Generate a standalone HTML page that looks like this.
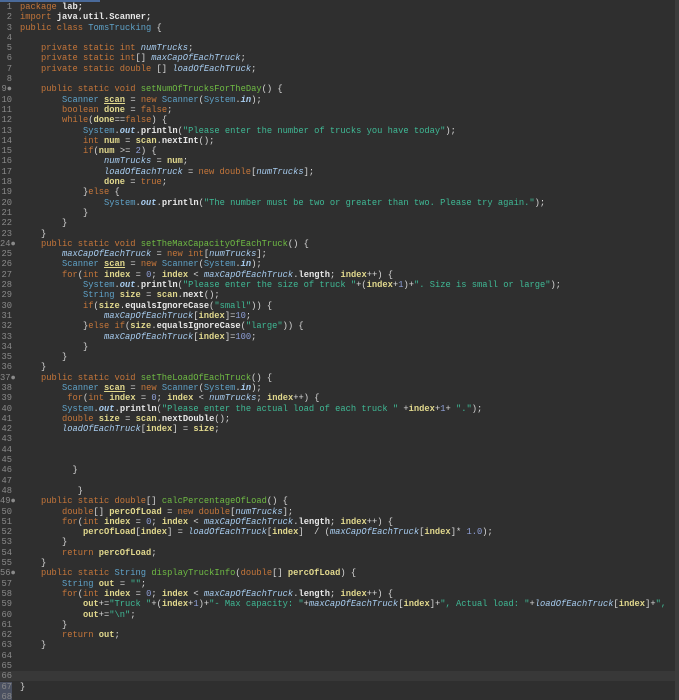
<!DOCTYPE html>
<html><head><meta charset="utf-8"><style>
html,body{margin:0;padding:0;background:#2f2f2f;width:679px;height:700px;overflow:hidden}
.wrap{position:relative;width:679px;height:700px;background:#2f2f2f}
.top{position:absolute;left:0;top:0;width:100px;height:2px;background:#4a6a9a}
.rb{position:absolute;right:0;top:0;width:4px;height:700px;background:#3c3c3c}
.cur{position:absolute;left:0;top:671px;width:675px;height:10px;background:#383838}
pre{margin:0;position:absolute;top:2px;left:0;font-family:"Liberation Mono",monospace;font-size:8.75px;line-height:10.29px;color:#d8d8d8}
.g{display:inline-block;width:12px;text-align:right;color:#8a8a8a;margin-right:8px}
.k{color:#c5763a}.s{color:#3fb995}.v{color:#e2d98e;font-weight:bold}.f{color:#a8cdf0;font-style:italic}
.m{color:#6fbb44}.t{color:#5fa2c8}.n{color:#8fa0d8}.o{color:#a8cdf0;font-style:italic;font-weight:bold}.p{color:#e8e8e8;font-weight:bold}
</style></head><body><div class="wrap"><div class="top"></div><div class="rb"></div><div class="cur"></div>
<pre><span class="g">1</span><span class="k">package</span> <span class="p">lab;</span>
<span class="g">2</span><span class="k">import</span> <span class="p">java.util.Scanner;</span>
<span class="g">3</span><span class="k">public class</span> <span class="t">TomsTrucking</span> {
<span class="g">4</span>
<span class="g">5</span>    <span class="k">private static int</span> <span class="f">numTrucks</span>;
<span class="g">6</span>    <span class="k">private static int</span>[] <span class="f">maxCapOfEachTruck</span>;
<span class="g">7</span>    <span class="k">private static double</span> [] <span class="f">loadOfEachTruck</span>;
<span class="g">8</span>
<span class="g">9●</span>    <span class="k">public static void</span> <span class="m">setNumOfTrucksForTheDay</span>() {
<span class="g">10</span>        <span class="t">Scanner</span> <span class="v"><u>scan</u></span> = <span class="k">new</span> <span class="t">Scanner</span>(<span class="t">System</span>.<span class="o">in</span>);
<span class="g">11</span>        <span class="k">boolean</span> <span class="v">done</span> = <span class="k">false</span>;
<span class="g">12</span>        <span class="k">while</span>(<span class="v">done</span>==<span class="k">false</span>) {
<span class="g">13</span>            <span class="t">System</span>.<span class="o">out</span>.<span class="p">println</span>(<span class="s">"Please enter the number of trucks you have today"</span>);
<span class="g">14</span>            <span class="k">int</span> <span class="v">num</span> = <span class="v">scan</span>.<span class="p">nextInt</span>();
<span class="g">15</span>            <span class="k">if</span>(<span class="v">num</span> &gt;= <span class="n">2</span>) {
<span class="g">16</span>                <span class="f">numTrucks</span> = <span class="v">num</span>;
<span class="g">17</span>                <span class="f">loadOfEachTruck</span> = <span class="k">new double</span>[<span class="f">numTrucks</span>];
<span class="g">18</span>                <span class="v">done</span> = <span class="k">true</span>;
<span class="g">19</span>            }<span class="k">else</span> {
<span class="g">20</span>                <span class="t">System</span>.<span class="o">out</span>.<span class="p">println</span>(<span class="s">"The number must be two or greater than two. Please try again."</span>);
<span class="g">21</span>            }
<span class="g">22</span>        }
<span class="g">23</span>    }
<span class="g">24●</span>    <span class="k">public static void</span> <span class="m">setTheMaxCapacityOfEachTruck</span>() {
<span class="g">25</span>        <span class="f">maxCapOfEachTruck</span> = <span class="k">new int</span>[<span class="f">numTrucks</span>];
<span class="g">26</span>        <span class="t">Scanner</span> <span class="v"><u>scan</u></span> = <span class="k">new</span> <span class="t">Scanner</span>(<span class="t">System</span>.<span class="o">in</span>);
<span class="g">27</span>        <span class="k">for</span>(<span class="k">int</span> <span class="v">index</span> = <span class="n">0</span>; <span class="v">index</span> &lt; <span class="f">maxCapOfEachTruck</span>.<span class="p">length</span>; <span class="v">index</span>++) {
<span class="g">28</span>            <span class="t">System</span>.<span class="o">out</span>.<span class="p">println</span>(<span class="s">"Please enter the size of truck "</span>+(<span class="v">index</span>+<span class="n">1</span>)+<span class="s">". Size is small or large"</span>);
<span class="g">29</span>            <span class="t">String</span> <span class="v">size</span> = <span class="v">scan</span>.<span class="p">next</span>();
<span class="g">30</span>            <span class="k">if</span>(<span class="v">size</span>.<span class="p">equalsIgnoreCase</span>(<span class="s">"small"</span>)) {
<span class="g">31</span>                <span class="f">maxCapOfEachTruck</span>[<span class="v">index</span>]=<span class="n">10</span>;
<span class="g">32</span>            }<span class="k">else if</span>(<span class="v">size</span>.<span class="p">equalsIgnoreCase</span>(<span class="s">"large"</span>)) {
<span class="g">33</span>                <span class="f">maxCapOfEachTruck</span>[<span class="v">index</span>]=<span class="n">100</span>;
<span class="g">34</span>            }
<span class="g">35</span>        }
<span class="g">36</span>    }
<span class="g">37●</span>    <span class="k">public static void</span> <span class="m">setTheLoadOfEachTruck</span>() {
<span class="g">38</span>        <span class="t">Scanner</span> <span class="v"><u>scan</u></span> = <span class="k">new</span> <span class="t">Scanner</span>(<span class="t">System</span>.<span class="o">in</span>);
<span class="g">39</span>         <span class="k">for</span>(<span class="k">int</span> <span class="v">index</span> = <span class="n">0</span>; <span class="v">index</span> &lt; <span class="f">numTrucks</span>; <span class="v">index</span>++) {
<span class="g">40</span>        <span class="t">System</span>.<span class="o">out</span>.<span class="p">println</span>(<span class="s">"Please enter the actual load of each truck "</span> +<span class="v">index</span>+<span class="n">1</span>+ <span class="s">"."</span>);
<span class="g">41</span>        <span class="k">double</span> <span class="v">size</span> = <span class="v">scan</span>.<span class="p">nextDouble</span>();
<span class="g">42</span>        <span class="f">loadOfEachTruck</span>[<span class="v">index</span>] = <span class="v">size</span>;
<span class="g">43</span>
<span class="g">44</span>
<span class="g">45</span>
<span class="g">46</span>          }
<span class="g">47</span>
<span class="g">48</span>           }
<span class="g">49●</span>    <span class="k">public static double</span>[] <span class="m">calcPercentageOfLoad</span>() {
<span class="g">50</span>        <span class="k">double</span>[] <span class="v">percOfLoad</span> = <span class="k">new double</span>[<span class="f">numTrucks</span>];
<span class="g">51</span>        <span class="k">for</span>(<span class="k">int</span> <span class="v">index</span> = <span class="n">0</span>; <span class="v">index</span> &lt; <span class="f">maxCapOfEachTruck</span>.<span class="p">length</span>; <span class="v">index</span>++) {
<span class="g">52</span>            <span class="v">percOfLoad</span>[<span class="v">index</span>] = <span class="f">loadOfEachTruck</span>[<span class="v">index</span>]  / (<span class="f">maxCapOfEachTruck</span>[<span class="v">index</span>]* <span class="n">1.0</span>);
<span class="g">53</span>        }
<span class="g">54</span>        <span class="k">return</span> <span class="v">percOfLoad</span>;
<span class="g">55</span>    }
<span class="g">56●</span>    <span class="k">public static</span> <span class="t">String</span> <span class="m">displayTruckInfo</span>(<span class="k">double</span>[] <span class="v">percOfLoad</span>) {
<span class="g">57</span>        <span class="t">String</span> <span class="v">out</span> = <span class="s">""</span>;
<span class="g">58</span>        <span class="k">for</span>(<span class="k">int</span> <span class="v">index</span> = <span class="n">0</span>; <span class="v">index</span> &lt; <span class="f">maxCapOfEachTruck</span>.<span class="p">length</span>; <span class="v">index</span>++) {
<span class="g">59</span>            <span class="v">out</span>+=<span class="s">"Truck "</span>+(<span class="v">index</span>+<span class="n">1</span>)+<span class="s">"- Max capacity: "</span>+<span class="f">maxCapOfEachTruck</span>[<span class="v">index</span>]+<span class="s">", Actual load: "</span>+<span class="f">loadOfEachTruck</span>[<span class="v">index</span>]+<span class="s">",</span>
<span class="g">60</span>            <span class="v">out</span>+=<span class="s">"\n"</span>;
<span class="g">61</span>        }
<span class="g">62</span>        <span class="k">return</span> <span class="v">out</span>;
<span class="g">63</span>    }
<span class="g">64</span>
<span class="g">65</span>
<span class="g">66</span>
<span class="g" style="background:#4a5060">67</span>}
<span class="g" style="background:#4a5060">68</span></pre></div></body></html>
